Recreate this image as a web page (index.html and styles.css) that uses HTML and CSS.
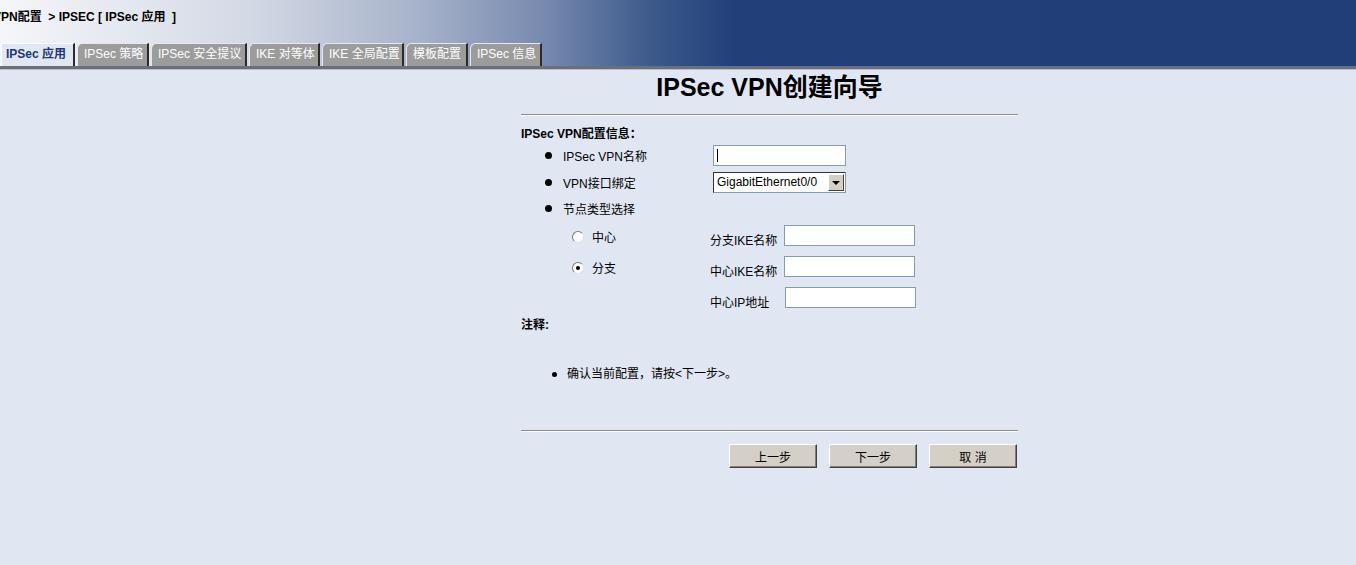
FILE: index.html
```html
<!DOCTYPE html>
<html lang="zh-CN">
<head>
	<meta charset="UTF-8">
	<title>IPSec VPN创建向导</title>
	<link rel="stylesheet" href="styles.css">
</head>
<body>
	<div class="top">
		<div class="crumb">VPN配置 &nbsp;&gt; IPSEC [ IPSec 应用 &nbsp;]</div>
		<ul class="tabs">
			<li class="on">IPSec 应用</li>
			<li>IPSec 策略</li>
			<li>IPSec 安全提议</li>
			<li>IKE 对等体</li>
			<li>IKE 全局配置</li>
			<li>模板配置</li>
			<li>IPSec 信息</li>
		</ul>
	</div>

	<div class="wizard">
		<h1>IPSec VPN创建向导</h1>
		<div class="line"></div>
		<div class="sub">IPSec VPN配置信息：</div>

		<div class="row">
			<span class="dot"></span><span class="lab">IPSec VPN名称</span>
			<span class="txt caret"></span>
		</div>
		<div class="row">
			<span class="dot"></span><span class="lab">VPN接口绑定</span>
			<span class="sel">GigabitEthernet0/0<i class="arr"></i></span>
		</div>
		<div class="row r3">
			<span class="dot"></span><span class="lab">节点类型选择</span>
		</div>

		<div class="node">
			<span class="radio"></span><span class="rlab">中心</span>
			<span class="nlab">分支IKE名称</span><span class="txt small"></span>
		</div>
		<div class="node">
			<span class="radio on"></span><span class="rlab">分支</span>
			<span class="nlab">中心IKE名称</span><span class="txt small"></span>
		</div>
		<div class="node">
			<span class="rlab blank"></span>
			<span class="nlab">中心IP地址</span><span class="txt small ip"></span>
		</div>

		<div class="sub note">注释:</div>
		<div class="tip"><span class="dot"></span>确认当前配置，请按&lt;下一步&gt;。</div>

		<div class="line bottom"></div>
		<div class="btns">
			<button>上一步</button>
			<button>下一步</button>
			<button>取 消</button>
		</div>
	</div>
</body>
</html>
```

FILE: styles.css
```css
*{
	margin: 0;
	padding: 0;
	list-style: none;
	box-sizing: border-box;
}
body{
	background: #e0e7f2;
	font-family: "Liberation Sans", "Noto Sans CJK SC", sans-serif;
	font-size: 12px;
	color: #000;
	height: 565px;
	overflow: hidden;
}
.top{
	height: 69px;
	background: linear-gradient(to right, #f5f6f9 0, #d3d9e5 250px, #a6b2ca 420px, #7789ae 545px, #3d5a8c 650px, #223f79 735px, #213e78 100%);
	border-bottom: 3px solid #6b6f77;
	box-shadow: 0 1px 0 #b9bec8;
	display: flex;
	flex-direction: column;
	justify-content: space-between;
}
.crumb{
	font-weight: bold;
	font-size: 12px;
	padding-top: 7px;
	margin-left: -7px;
	color: #000;
}
.tabs{
	display: flex;
	gap: 2px;
	padding-left: 1px;
}
.tabs>li{
	height: 23px;
	line-height: 21px;
	padding: 0 6px 0 6px;
	background: #9c9c9c;
	color: #fff;
	border-top: 1px solid #e8e8e8;
	border-left: 1px solid #e8e8e8;
	border-right: 2px solid #2a2a2a;
	border-top-left-radius: 5px 6px;
	white-space: nowrap;
}
.tabs>li:nth-child(2){width: 72px;}
.tabs>li:nth-child(3){width: 96px;}
.tabs>li:nth-child(4){width: 71px;}
.tabs>li:nth-child(5){width: 82px;}
.tabs>li:nth-child(6){width: 62px;}
.tabs>li:nth-child(7){width: 72px;}
.tabs>li.on{
	width: 74px;
	background: #e0e7f2;
	color: #1c3773;
	font-weight: bold;
	border-top-color: #fff;
	border-left-color: #fff;
	border-right-color: #2a2a2a;
	padding-left: 4px;
	border-radius: 0;
}

.wizard{
	width: 497px;
	margin-left: 521px;
}
h1{
	text-align: center;
	font-size: 25px;
	line-height: 28px;
	margin-top: 4px;
	font-weight: bold;
}
.line{
	height: 2px;
	border-top: 1px solid #8a8a8a;
	border-bottom: 1px solid #fff;
	margin-top: 13px;
}
.sub{
	font-weight: bold;
	margin-top: 10px;
	line-height: 16px;
}
.row{
	display: flex;
	align-items: center;
	height: 27px;
	padding-left: 24px;
}
.row:first-of-type{margin-top: 6px;}
.dot{
	width: 7px;
	height: 7px;
	border-radius: 50%;
	background: #000;
	margin-right: 11px;
	display: inline-block;
}
.lab{
	width: 150px;
}
.txt{
	width: 133px;
	height: 21px;
	background: #fff;
	border: 1px solid #7f9db9;
	position: relative;
}
.caret::after{
	content: "";
	position: absolute;
	left: 3px;
	top: 3px;
	width: 1px;
	height: 13px;
	background: #000;
}
.sel{
	width: 133px;
	height: 21px;
	background: #fff;
	border: 1px solid #7f9db9;
	border-left-color: #333;
	border-top-color: #333;
	line-height: 18px;
	padding-left: 3px;
	position: relative;
	font-size: 12px;
}
.arr{
	position: absolute;
	right: 1px;
	top: 1px;
	width: 16px;
	height: 17px;
	background: #d4d0c8;
	border: 1px solid;
	border-color: #fff #404040 #404040 #fff;
}
.arr::after{
	content: "";
	position: absolute;
	left: 3px;
	top: 6px;
	border-left: 4px solid transparent;
	border-right: 4px solid transparent;
	border-top: 4px solid #000;
}
.r3{height: 25px;}
.node{
	display: flex;
	align-items: center;
	height: 31px;
	padding-left: 51px;
}
.radio{
	width: 12px;
	height: 12px;
	border-radius: 50%;
	background: #fff;
	border: 1px solid #7a7a7a;
	border-right-color: #e0e0e0;
	border-bottom-color: #e0e0e0;
	margin-right: 8px;
	position: relative;
}
.radio.on::after{
	content: "";
	position: absolute;
	left: 3px;
	top: 3px;
	width: 4px;
	height: 4px;
	border-radius: 50%;
	background: #000;
}
.rlab{
	width: 118px;
}
.rlab.blank{margin-left: 20px;}
.nlab{
	width: 74px;
	margin-top: 6px;
}
.txt.small{
	width: 131px;
	margin-bottom: 3px;
}
.txt.ip{margin-left: 1px;}
.note{margin-top: 3px;}
.tip{
	display: flex;
	align-items: center;
	padding-left: 31px;
	margin-top: 33px;
	line-height: 16px;
}
.tip .dot{
	width: 5px;
	height: 5px;
	margin-right: 10px;
}
.line.bottom{margin-top: 48px;}
.btns{
	display: flex;
	justify-content: flex-end;
	gap: 12px;
	margin-top: 12px;
	padding-right: 1px;
}
.btns>button{
	width: 88px;
	height: 24px;
	background: #d4d0c8;
	border: 1px solid;
	border-color: #fff #404040 #404040 #fff;
	box-shadow: inset -1px -1px 0 #808080;
	font-family: "Liberation Sans", "Noto Sans CJK SC", sans-serif;
	font-size: 12px;
	color: #000;
}
```
